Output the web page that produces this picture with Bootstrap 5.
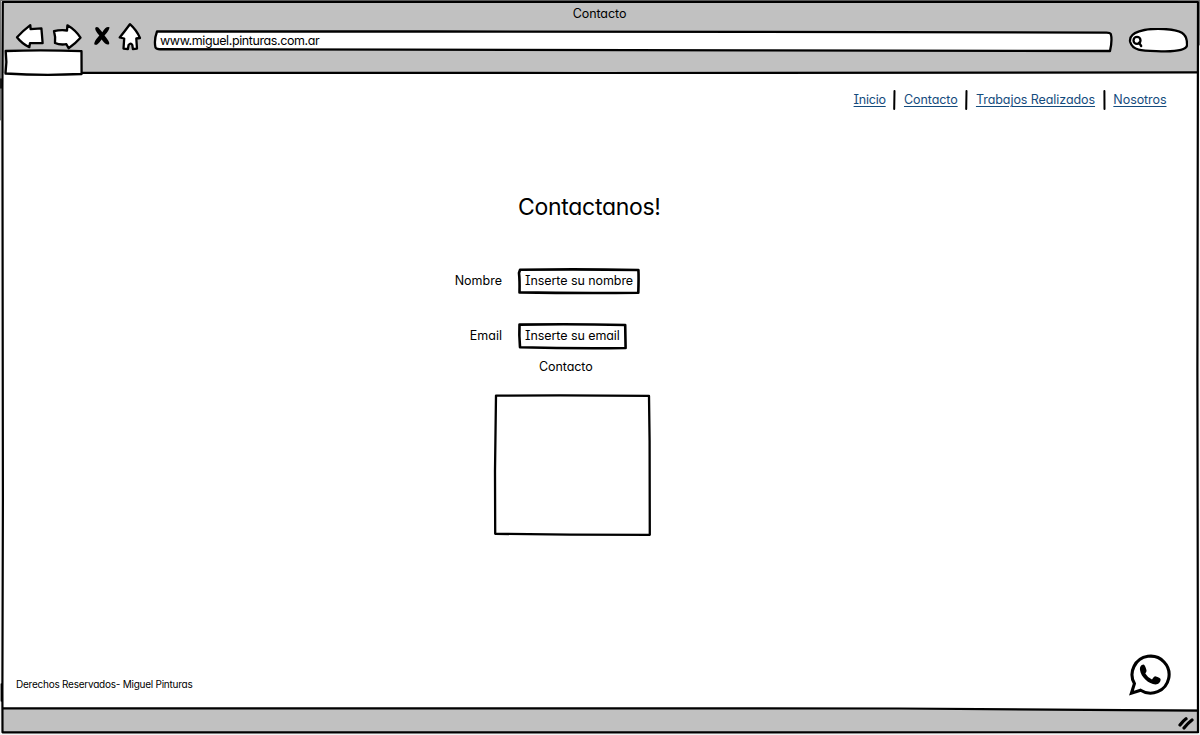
<!DOCTYPE html>
<html lang="es">
<head>
<meta charset="utf-8">
<meta name="viewport" content="width=device-width, initial-scale=1">
<title>Contacto</title>
<link href="https://cdn.jsdelivr.net/npm/bootstrap@5.3.0/dist/css/bootstrap.min.css" rel="stylesheet">
<style>
body{font-family:Inter,"Liberation Sans",sans-serif;font-feature-settings:"cv11","cv08";font-size:12.5px;line-height:16px;letter-spacing:-.07px;color:#000;background:#f4f4f4;overflow:hidden}
svg{display:block;fill:none;stroke:#000;stroke-width:2.6;stroke-linecap:round;stroke-linejoin:round}
.window{width:1200px;height:735px}
.window-inner{height:733px;margin:0 2px 0 3px;background:#fff}
.outline{position:absolute;left:0;top:0;width:100%;height:100%;overflow:visible;pointer-events:none}
.chrome{height:73px;background:#c1c1c1}
.window-title{height:22px;padding-top:6px;padding-right:2px}
.toolbar{height:27px;padding-left:11.5px}
.address{width:960px;height:22px;padding-left:7px;margin:10px 0 0 33.5px}
.search{width:60px;height:25px;margin:10px 0 0 14.5px}
.tab{width:79px;height:26px;margin-left:1px}
.page{height:636px}
.menu{padding:17px 31.5px 0 0}
.menu a{color:#144b7d;text-decoration:underline;text-decoration-thickness:1px;text-underline-offset:2px}
.menu svg{width:3px;height:20px;margin:0 7.5px 0 7.8px}
.t-inicio{letter-spacing:-.25px}
.t-url{letter-spacing:-.4px}
h1{font-size:23px;line-height:30px;font-weight:400;letter-spacing:-.3px;width:143px;margin:82px 0 0 515px}
.field label{width:499px;letter-spacing:0}
.first-field{margin-top:46px}
.next-field{margin-top:29px}
.inputbox{height:26px;padding:0 0 0 8px;margin-left:15px}
.name-box{width:123px}
.email-box{width:110px}
.caption-text{margin-left:536px;margin-top:10px}
.msg{width:157px;height:141px;margin:20px 0 0 491px}
.page-foot{padding:0 27.5px 13px 13px}
.legal{font-size:10px;letter-spacing:-.24px;margin-bottom:4px}
.statusbar{height:24px;background:#c1c1c1;padding:5px 3px 0 0}
</style>
</head>
<body>
<div class="window position-relative">
<div class="window-inner d-flex flex-column">
  <header class="chrome">
    <div class="window-title text-center">Contacto</div>
    <div class="toolbar d-flex align-items-center">
      <svg width="105" height="28" viewBox="15 22 105 28" overflow="visible" aria-hidden="true">
        <path fill="#fff" stroke-width="2.3" d="M17 37.2Q23 30.8 30.3 25.2L30.6 29.2L41.4 28.4Q42 35 42.6 43L30 43.2L29.3 47.2Q21.5 43.2 17 37.2Z"/>
        <path fill="#fff" stroke-width="2.3" d="M54 31.2Q60 29.7 67 30.5L67.4 25.3Q75.5 30 80.5 37.7Q75.5 43.4 68.6 48.2L66.4 44.2Q60 45.2 55 43Q55.6 36.5 54 31.2Z"/>
        <path fill="#000" stroke="none" d="M95.5 27.6Q97.5 26 100 29.5L102.3 32.2Q106 25.6 109.5 27.2Q109.5 30 104.5 35.5Q110 42 109.2 43.9Q107 46.5 101.6 39.4Q97 46.3 94.5 44.5Q93 42.6 99.3 35.6Q94 29.6 95.5 27.6Z"/>
        <path fill="#fff" stroke-width="2.3" d="M129.9 24.2Q124.5 31.5 119.7 37.5L124.2 38.5L123.5 48.6L127.9 49L128.6 45Q130.8 42.4 132.3 45L132.9 49L137 48.6L136.3 38.5L140 38Q136.5 30 129.9 24.2Z"/>
      </svg>
      <div class="address position-relative d-flex align-items-center">
        <svg class="outline" viewBox="0 0 960 22" preserveAspectRatio="none"><path fill="#fff" stroke-width="2.3" d="M4 1.5Q.8 10 2.5 17.5Q3.5 19.5 8 19.2L250 19.6L600 20.4L957 21Q959.5 10 957.8 4Q957 2.5 953 2.6L600 1.8L280 1.5Z"/></svg>
        <span class="t-url position-relative">www.miguel.pinturas.com.ar</span>
      </div>
      <svg class="search" viewBox="1127 29 60 25"><path fill="#fff" stroke-width="2.3" d="M1129.2 43C1127 33 1144 29 1163 30C1180 31 1186 34 1186 45C1187 51 1176 52 1164 52.4C1144 51.5 1132 53 1129.2 43Z"/><circle cx="1136" cy="41.4" r="3.5" stroke-width="2.3"/><path stroke-width="2.3" d="M1138 43.7L1140.2 47"/></svg>
    </div>
    <div class="tab position-relative">
      <svg class="outline" viewBox="4 49 79 26"><path fill="#fff" stroke-width="2.3" d="M5.7 51Q43 49.7 81.5 51.2L81.6 74Q43 75.8 5.5 73.5L6.4 62Z"/></svg>
    </div>
  </header>

  <main class="page d-flex flex-column">
    <nav class="menu d-flex justify-content-end align-items-center" aria-label="Principal">
      <a href="#" class="t-inicio">Inicio</a><svg viewBox="0 0 3 20"><path stroke-width="2" d="M1.5 1L1.2 19"/></svg>
      <a href="#">Contacto</a><svg viewBox="0 0 3 20"><path stroke-width="2" d="M1.5 1L1.2 19"/></svg>
      <a href="#">Trabajos Realizados</a><svg viewBox="0 0 3 20"><path stroke-width="2" d="M1.4 1L1.5 19"/></svg>
      <a href="#">Nosotros</a>
    </nav>
    <h1 class="text-nowrap">Contactanos!</h1>
    <div class="field first-field d-flex align-items-center">
      <label class="text-end">Nombre</label>
      <div class="inputbox name-box position-relative d-flex align-items-center">
        <svg class="outline" viewBox="0 0 123 26"><path d="M3 1.8Q60 .8 121.4 2Q121.8 9 121.3 24.8Q60 25.4 2.5 24.4Q2.8 12 2 5Z"/></svg>
        <span class="text-nowrap">Inserte su nombre</span>
      </div>
    </div>
    <div class="field next-field d-flex align-items-center">
      <label class="text-end">Email</label>
      <div class="inputbox email-box position-relative d-flex align-items-center">
        <svg class="outline" viewBox="0 0 110 26"><path d="M2.5 1.6Q55 .6 108.2 2L108.6 25Q55 25.6 3 24.2Q2 12 2.5 1.6Z"/></svg>
        <span class="text-nowrap">Inserte su email</span>
      </div>
    </div>
    <div class="caption-text">Contacto</div>
    <div class="msg position-relative"><svg class="outline" viewBox="494 394 157 141"><path stroke-width="2.3" d="M496 394.6L560 394.3L649 394.9L649.6 440L649.8 533.8L570 533.7L495.2 532.8L495 470Z"/></svg></div>
    <footer class="page-foot mt-auto d-flex justify-content-between align-items-end">
      <div class="legal">Derechos Reservados- Miguel Pinturas</div>
      <svg width="42" height="42" viewBox="1129 654 42 42" role="img" aria-label="WhatsApp">
        <path stroke-width="3.1" stroke-linejoin="miter" d="M1131.4 693.2L1134.4 683.6A18.5 18.5 0 1 1 1140.6 690.2Z"/>
        <path fill="#000" stroke="none" d="M1143.5 664.5C1141 664.7 1139.6 667.3 1140 670C1140.8 677 1149 684.3 1155.5 684.4C1158.8 684.4 1160.7 682 1160.6 679.3Q1160.4 678 1155.2 676.3Q1154.2 676.3 1152 679.5Q1148 678 1145.3 673.5Q1146.8 671.6 1146.5 670.3Q1145.2 665 1143.5 664.5Z"/>
      </svg>
    </footer>
  </main>
  <div class="statusbar d-flex justify-content-end">
    <svg width="18" height="16" viewBox="1177 714 18 16"><path stroke-width="3.2" d="M1180 725Q1183 721 1186 718.8M1184 728Q1188 723 1192 720"/></svg>
  </div>
</div>
<svg class="outline" viewBox="0 0 1200 735" aria-hidden="true">
  <path stroke="#777" stroke-width="1" d="M0 .5H1200M.5 0V120M1199.5 0V45"/>
  <path stroke-width="2.2" d="M2.8 2L600 1.8L1198 2L1197.4 370L1198 732.2L600 732.4L2.5 732.3L2.4 690L2.9 500L2.4 88Z"/>
  <path stroke-width="2.2" d="M82 72.8L600 73L1197 72.4M3 708.4L600 708.3L900 708.5Q1050 709 1197 710.6"/>
  <path stroke-width="1.6" d="M1 79V88M1.4 684V701"/>
</svg>
</div>
<script src="https://cdn.jsdelivr.net/npm/bootstrap@5.3.0/dist/js/bootstrap.bundle.min.js"></script>
</body>
</html>
